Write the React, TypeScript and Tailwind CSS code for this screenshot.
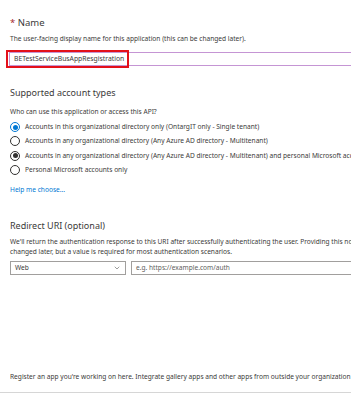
import { ChevronDown } from 'lucide-react'

const accountTypes = [
  { label: 'Accounts in this organizational directory only (OntargIT only - Single tenant)', state: 'selected' },
  { label: 'Accounts in any organizational directory (Any Azure AD directory - Multitenant)', state: 'off' },
  {
    label:
      'Accounts in any organizational directory (Any Azure AD directory - Multitenant) and personal Microsoft accounts (e.g. Skype, Xbox)',
    state: 'dot',
  },
  { label: 'Personal Microsoft accounts only', state: 'off' },
]

function Radio({ state }: { state: string }) {
  if (state === 'selected') {
    return (
      <span className="flex size-[10px] shrink-0 items-center justify-center rounded-full border border-[#0078d4]">
        <span className="size-[5px] rounded-full bg-[#0078d4]" />
      </span>
    )
  }
  if (state === 'dot') {
    return (
      <span className="flex size-[10px] shrink-0 items-center justify-center rounded-full border border-[#323130]">
        <span className="size-[5px] rounded-full bg-[#323130]" />
      </span>
    )
  }
  return <span className="size-[10px] shrink-0 rounded-full border border-[#323130]" />
}

export default function App() {
  return (
    <div className="h-[400px] w-[351px] overflow-hidden bg-white font-['Noto_Sans',sans-serif] text-[#3b3a39]">
      <div className="pt-[16px] pl-[10px]">
        {/* Name */}
        <div className="text-[9.5px] leading-[14px]">
          <span className="text-[#a4262c]">*</span> Name
        </div>
        <p className="mt-[4px] whitespace-nowrap text-[6.6px] leading-[10px]">
          The user-facing display name for this application (this can be changed later).
        </p>
        <div className="relative mt-[8px] -ml-[1px]">
          <div className="h-[14px] border-y-[1.5px] border-l-[1.5px] border-[#c595d4] bg-white pl-[4px] text-[6.8px] leading-[11px] whitespace-nowrap">
            BETestServiceBusAppResgistration
          </div>
          <div className="absolute -top-[2px] -left-[3px] h-[18px] w-[123px] border-2 border-[#e3101a]" />
        </div>

        {/* Supported account types */}
        <div className="mt-[20px] text-[9px] leading-[14px]">Supported account types</div>
        <p className="mt-[7px] whitespace-nowrap text-[6.6px] leading-[10px]">
          Who can use this application or access this API?
        </p>
        <div className="mt-[5px] flex flex-col gap-[4.3px]">
          {accountTypes.map((a) => (
            <div key={a.label} className="flex h-[10px] items-center gap-[5px]">
              <Radio state={a.state} />
              <span className="whitespace-nowrap text-[6.6px] leading-[10px]">{a.label}</span>
            </div>
          ))}
        </div>
        <a className="mt-[10px] block text-[6.6px] leading-[10px] text-[#0078d4]">Help me choose...</a>

        {/* Redirect URI */}
        <div className="mt-[24px] text-[9px] leading-[14px]">Redirect URI (optional)</div>
        <div className="mt-[4px] text-[6.6px] leading-[10px] whitespace-nowrap">
          <p>
            We'll return the authentication response to this URI after successfully authenticating the user. Providing this now is optional and it can be
          </p>
          <p>changed later, but a value is required for most authentication scenarios.</p>
        </div>
        <div className="mt-[4px] flex gap-[5px]">
          <div className="flex h-[14px] w-[116px] shrink-0 items-center justify-between border border-[#a19f9d] px-[4px] text-[6.6px]">
            <span>Web</span>
            <ChevronDown size={8} strokeWidth={1.5} />
          </div>
          <div className="flex h-[14px] flex-1 items-center border-y border-l border-[#a19f9d] px-[4px] text-[6.6px] text-[#605e5c]">
            e.g. https://example.com/auth
          </div>
        </div>
      </div>

      <div className="mt-[97px] pl-[10px]">
        <p className="whitespace-nowrap text-[6.6px] leading-[10px]">
          Register an app you're working on here. Integrate gallery apps and other apps from outside your organization by adding from Enterprise applications.
        </p>
      </div>
      <div className="mt-[10px] h-px bg-[#d6d6d6]" />
    </div>
  )
}
